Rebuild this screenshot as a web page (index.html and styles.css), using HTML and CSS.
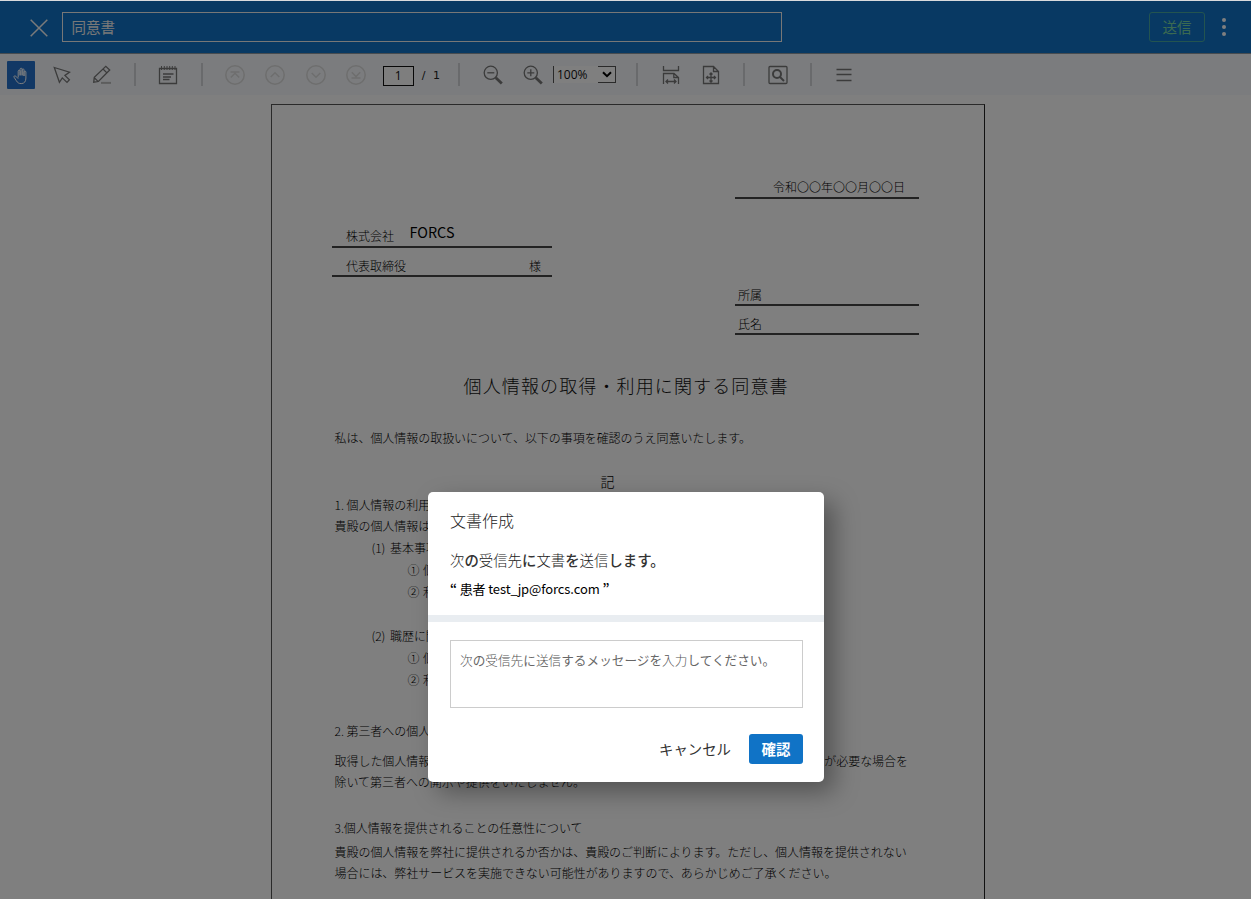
FILE: index.html
```html
<!DOCTYPE html>
<html lang="ja">
<head>
<meta charset="utf-8">
<title>同意書</title>
<link rel="stylesheet" href="styles.css">
</head>
<body>
<div class="app">
  <header class="topbar">
    <svg class="close" width="18" height="18" viewBox="0 0 18 18"><path d="M.7.7l16.6 16.6M17.3.7L.7 17.3"/></svg>
    <div class="doc-name">同意書</div>
    <div class="send">送信</div>
    <div class="more"><i></i><i></i><i></i></div>
  </header>
  <nav class="toolbar">
    <span class="tool active"><svg width="20" height="20" viewBox="0 0 20 20"><path d="M6.2 11.500V5.200c0-1.400 1.900-1.400 1.900 0V9.400V3.300c0-1.500 2-1.500 2 0V9.400V3.900c0-1.400 1.900-1.400 1.900 0V10V6c0-1.300 1.900-1.300 1.900 0v6c0 3.600-1.600 5.600-4.700 5.600-2.500 0-3.700-1-4.900-2.900L2.100 11.300c-.7-1.200.8-2 1.700-1.100l2.400 2.500"/></svg></span>
    <span class="tool t-arrow"><svg width="20" height="20" viewBox="0 0 20 20"><path d="M2.300 2.500l15.200 4.700-4.600 3.200 4.500 4.300-2.400 2.700-4.700-4.500-2.900 4.400z"/></svg></span>
    <span class="tool t-pen"><svg width="20" height="20" viewBox="0 0 20 20"><path class="thin" d="M9 17.900h10"/><path d="M1.700 17.300l.6-5L13.800 1.300l3.900 3.700L6.400 16.500zM11 4l3.900 3.900M2.300 12.700l4 3.900"/></svg></span>
    <b class="sep s1"></b>
    <span class="tool t-note"><svg width="20" height="20" viewBox="0 0 20 20"><path d="M1.500 3.500h17v15h-17zM5 9h10.500M5 12h8M5 14.500h6.500"/><path class="ticks" d="M3.500 1v4M6.300 1v4M9 1v4M11.700 1v4M14.300 1v4M17 1v4"/></svg></span>
    <b class="sep s2"></b>
    <span class="tool dim d1"><svg width="20" height="20" viewBox="0 0 20 20"><circle cx="10" cy="10" r="9.200"/><path d="M5.500 7h9M5.800 12.500L10 8.200l4.200 4.300"/></svg></span>
    <span class="tool dim d2"><svg width="20" height="20" viewBox="0 0 20 20"><circle cx="10" cy="10" r="9.200"/><path d="M5.700 12L10 7.700l4.300 4.300"/></svg></span>
    <span class="tool dim d2"><svg width="20" height="20" viewBox="0 0 20 20"><circle cx="10" cy="10" r="9.200"/><path d="M5.700 8l4.300 4.300L14.300 8"/></svg></span>
    <span class="tool dim d2"><svg width="20" height="20" viewBox="0 0 20 20"><circle cx="10" cy="10" r="9.200"/><path d="M5.500 13h9M5.800 7.300l4.200 4.300 4.200-4.300"/></svg></span>
    <span class="page-no">1</span>
    <span class="page-total">/ 1</span>
    <b class="sep s3"></b>
    <span class="tool t-zout"><svg width="20" height="20" viewBox="0 0 20 20"><circle cx="7.800" cy="7.800" r="6.600"/><path d="M4.300 7.800h7"/><path class="fat" d="M12.800 12.800l6 5.800"/></svg></span>
    <span class="tool t-zin"><svg width="20" height="20" viewBox="0 0 20 20"><circle cx="7.800" cy="7.800" r="6.600"/><path d="M4.300 7.800h7M7.800 4.300v7"/><path class="fat" d="M12.800 12.800l6 5.800"/></svg></span>
    <span class="zoom-select"><span class="zoom-value">100%</span><span class="zoom-arrow"><svg width="10" height="7" viewBox="0 0 10 7"><path d="M1 1.200l4 4 4-4"/></svg></span></span>
    <b class="sep s4"></b>
    <span class="tool t-fitw"><svg width="20" height="20" viewBox="0 0 20 20"><path d="M2.500 1v4.500h15V1M2.500 19V8.500h10.500l4.500 4V19M12.800 8.500v4h4.700M5 16.500h10M7 14.500l-2 2 2 2M13 14.500l2 2-2 2"/></svg></span>
    <span class="tool t-fitp"><svg width="20" height="20" viewBox="0 0 20 20"><path d="M2.500 1.500h10l5 5v12h-15zM12.500 1.500v5h5M5.500 12.500h9M10 8v9M7 11l-1.500 1.500L7 14M13 11l1.500 1.500L13 14M8.500 9.500L10 8l1.500 1.500M8.500 15.500L10 17l1.500-1.500"/></svg></span>
    <b class="sep s5"></b>
    <span class="tool t-find"><svg width="20" height="20" viewBox="0 0 20 20"><rect x="1" y="1.500" width="18" height="17" rx="1"/><circle class="bold" cx="9" cy="9" r="4"/><path class="bold" d="M12 12l4 4"/></svg></span>
    <b class="sep s6"></b>
    <span class="tool t-menu"><svg width="20" height="20" viewBox="0 0 20 20"><path d="M2.500 4.500h15M2.500 9.500h15M2.500 15.500h15"/></svg></span>
  </nav>
  <main class="viewer">
    <article class="paper">
      <div class="field date">令和〇〇年〇〇月〇〇日</div>
      <div class="field company"><span>株式会社</span><span class="company-name">FORCS</span></div>
      <div class="field rep"><span>代表取締役</span><span>様</span></div>
      <div class="field dept">所属</div>
      <div class="field name">氏名</div>
      <h1>個人情報の取得・利用に関する同意書</h1>
      <p class="g-intro">私は、個人情報の取扱いについて、以下の事項を確認のうえ同意いたします。</p>
      <p class="mark">記</p>
      <p class="g-3">1. 個人情報の利用</p>
      <p class="g-1">貴殿の個人情報は</p>
      <p class="g-2 in1">(1) 基本事項</p>
      <p class="g-2 in2">① 個</p>
      <p class="g-2 in2">② 利</p>
      <p class="g-24 in1">(2) 職歴に関</p>
      <p class="g-2 in2">① 個</p>
      <p class="g-2 in2">② 利</p>
      <p class="g-31">2. 第三者への個人</p>
      <p class="g-10 split"><span>取得した個人情報</span><span>が必要な場合を</span></p>
      <p class="g-1">除いて第三者への開示や提供をいたしません。</p>
      <p class="g-27">3.個人情報を提供されることの任意性について</p>
      <p class="g-4">貴殿の個人情報を弊社に提供されるか否かは、貴殿のご判断によります。ただし、個人情報を提供されない</p>
      <p class="g-1">場合には、弊社サービスを実施できない可能性がありますので、あらかじめご了承ください。</p>
    </article>
  </main>
</div>
<div class="overlay"></div>
<section class="dialog">
  <div class="dialog-head">
    <h2>文書作成</h2>
    <p class="lead">次<em>の</em>受信先<em>に</em>文書<em>を</em>送信<em>します。</em></p>
    <p class="recipient"><b>“</b> 患者 test_jp@forcs.com <b>”</b></p>
  </div>
  <div class="dialog-body">
    <div class="message">次<em>の</em>受信先<em>に</em>送信<em>するメッセージを</em>入力<em>してください。</em></div>
    <div class="actions"><span class="cancel">キャンセル</span><span class="ok">確認</span></div>
  </div>
</section>
</body>
</html>
```

FILE: styles.css
```css
* { box-sizing: border-box; }
body {
  margin: 0;
  height: 899px;
  overflow: hidden;
  font-family: "Noto Sans CJK JP", sans-serif;
  background: #fff;
}
h1, h2, p { margin: 0; font-weight: 300; }
svg { display: block; fill: none; }

.app { display: flex; flex-direction: column; height: 899px; border-top: 1px solid #d9dbdd; }

.topbar {
  display: flex;
  align-items: center;
  flex: none;
  height: 53px;
  padding: 0 24px 1px 30px;
  background: #1073c6;
  border-bottom: 1px solid #8f98a0;
}
.close { margin-top: 2px; stroke: #f5f5f5; stroke-width: 1.5; }
.doc-name {
  width: 720px;
  height: 30px;
  margin-left: 14px;
  padding-left: 8.500px;
  border: 1px solid #eee;
  color: #f0f0f0;
  font-size: 14.500px;
  line-height: 28px;
}
.send {
  width: 56px;
  height: 30px;
  margin-left: auto;
  border: 1px solid #47a9a0;
  border-radius: 3px;
  color: #79d5a2;
  font-size: 14.500px;
  line-height: 28px;
  text-align: center;
}
.more { display: flex; flex-direction: column; gap: 3px; margin-left: 17px; margin-right: 1px; }
.more i { width: 4px; height: 4px; border-radius: 50%; background: #fff; }

.toolbar {
  display: flex;
  align-items: center;
  flex: none;
  height: 41px;
  padding-left: 7px;
  background: #f6f9fd;
}
.tool { flex: none; width: 20px; height: 20px; }
.tool svg { stroke: #777; stroke-width: 1.3; }
.active {
  display: grid;
  place-items: center;
  width: 28px;
  height: 28px;
  border-radius: 1px;
  background: #2470cb;
}
.active svg { margin: 2px 0 0 2px; stroke: #fff; stroke-width: 1; }
.dim svg { stroke: #dcdcdc; stroke-width: 1.5; }
.tool .thin { stroke: #bbb; stroke-width: 2; }
.tool .ticks { stroke-width: 1; }
.tool .fat { stroke-width: 2.800; }
.tool .bold { stroke-width: 2; }
.t-arrow { margin-left: 17px; }
.t-pen { margin-left: 20px; }
.t-note { margin-left: 22px; }
.d1 { margin-left: 22px; }
.d2 { margin-left: 20.250px; }
.sep { flex: none; width: 2px; height: 23px; background: #d3d5d8; }
.s1 { margin-left: 22px; }
.s2 { margin-left: 23px; }
.s3 { margin-left: 17.250px; }
.s4 { margin-left: 20px; }
.s5 { margin-left: 22px; }
.s6 { margin-left: 22px; }
.page-no {
  width: 31px;
  height: 20px;
  margin: 2px 0 0 17px;
  border: 1px solid #111;
  background: #fcfcfc;
  color: #111;
  font: 12px/17px "Open Sans", sans-serif;
  text-align: center;
}
.page-total {
  width: 19px;
  margin: 2px 0 0 8px;
  color: #222;
  font: 11px/18px "DejaVu Sans", sans-serif;
  word-spacing: 4px;
  white-space: nowrap;
}
.t-zout { margin-left: 22.500px; }
.t-zin { margin-left: 20px; }
.zoom-select { display: flex; width: 63px; height: 17px; margin-left: 10.500px; border-left: 1px solid #555; background: #fff; }
.zoom-value { flex: 1; padding-left: 3px; color: #111; font: 12px/17px "Open Sans", sans-serif; }
.zoom-arrow { display: grid; place-items: center; width: 18px; border: 1px solid #555; border-left: 0; }
.zoom-arrow svg { stroke: #000; stroke-width: 2; }
.t-fitw { margin-left: 23px; }
.t-fitp { margin-left: 20px; }
.t-find { margin-left: 22.500px; }
.t-menu { margin-left: 22.500px; }

.viewer {
  display: flex;
  flex: 1;
  min-height: 0;
  padding: 9px 0 0 271px;
  overflow: hidden;
  background: #fefefe;
}
.paper {
  display: flex;
  flex-direction: column;
  align-items: flex-start;
  flex: none;
  width: 714px;
  height: 1000px;
  padding: 72px 0 0 62.500px;
  border: 1px solid #555;
  border-right-color: #222;
  background: #fff;
  color: #000;
  font-size: 12px;
  font-weight: 300;
}
.paper p { flex: none; line-height: 20px; letter-spacing: -.04px; white-space: nowrap; }
.field { flex: none; height: 22px; border-bottom: 2px solid #444; line-height: 20px; white-space: nowrap; }
.date { width: 184px; margin-left: 400.500px; padding-left: 38px; }
.company, .rep { display: flex; width: 220px; margin-left: -2.500px; padding: 0 11px 0 14px; }
.company { margin-top: 27px; }
.company-name { margin: -4px 0 0 15.500px; font-size: 14.400px; font-weight: 400; color: #000; }
.rep { justify-content: space-between; margin-top: 7px; line-height: 21px; }
.dept, .name { width: 184px; margin-left: 400.500px; padding-left: 3px; line-height: 21px; }
.dept { margin-top: 7px; }
.name { margin-top: 7px; }
.paper h1 { margin: 35px 0 0 129px; font-size: 18px; line-height: 30px; letter-spacing: 1.130px; white-space: nowrap; color: #111; }
.paper .g-intro { margin-top: 28px; }
.paper .mark { margin: 23px 0 0 266px; font-size: 14px; }
.g-3 { margin-top: 4px; }
.g-1 { margin-top: 1px; }
.g-2 { margin-top: 2px; }
.g-4 { margin-top: 4px; }
.g-10 { margin-top: 10px; }
.g-24 { margin-top: 24px; }
.g-27 { margin-top: 26px; }
.g-31 { margin-top: 31px; }
.in1 { margin-left: 37px; word-spacing: 2px; }
.in2 { margin-left: 73px; word-spacing: 1px; }
.split { display: flex; justify-content: space-between; width: 573.500px; }

.overlay { position: absolute; inset: 1px 0 0; background: rgba(0, 0, 0, .5); }

.dialog {
  position: absolute;
  left: 428px;
  top: 492px;
  display: flex;
  flex-direction: column;
  width: 396px;
  height: 290px;
  border-radius: 5px;
  background: #fff;
  box-shadow: 10px 10px 24px rgba(0, 0, 0, .35);
  color: #222;
}
.dialog em { font-style: normal; font-weight: 500; }
.dialog-head { height: 130px; padding: 16px 22px 0; border-bottom: 7px solid #e9edf1; }
.dialog h2 { font-size: 16px; line-height: 24px; }
.lead { margin-top: 16px; font-size: 14.400px; line-height: 24px; }
.lead em { color: #333; }
.dialog .recipient { margin-top: 7px; font-size: 13px; line-height: 20px; font-weight: 400; color: #000; white-space: nowrap; letter-spacing: -.1px; }
.recipient b { font-size: 12px; }
.dialog-body { padding: 18px 21px 0 22px; }
.message {
  height: 68px;
  padding: 9px 9px;
  border: 1px solid #ccc;
  color: #555;
  font-size: 12.650px;
  font-weight: 300;
  line-height: 20px;
  white-space: nowrap;
}
.message em { font-weight: 400; color: #666; }
.actions { display: flex; justify-content: flex-end; gap: 18px; margin-top: 26px; font-size: 14.400px; line-height: 30px; }
.cancel { color: #333; }
.ok { width: 54px; height: 30px; border-radius: 3px; background: #1073c6; color: #fff; font-weight: 700; text-align: center; }
```
